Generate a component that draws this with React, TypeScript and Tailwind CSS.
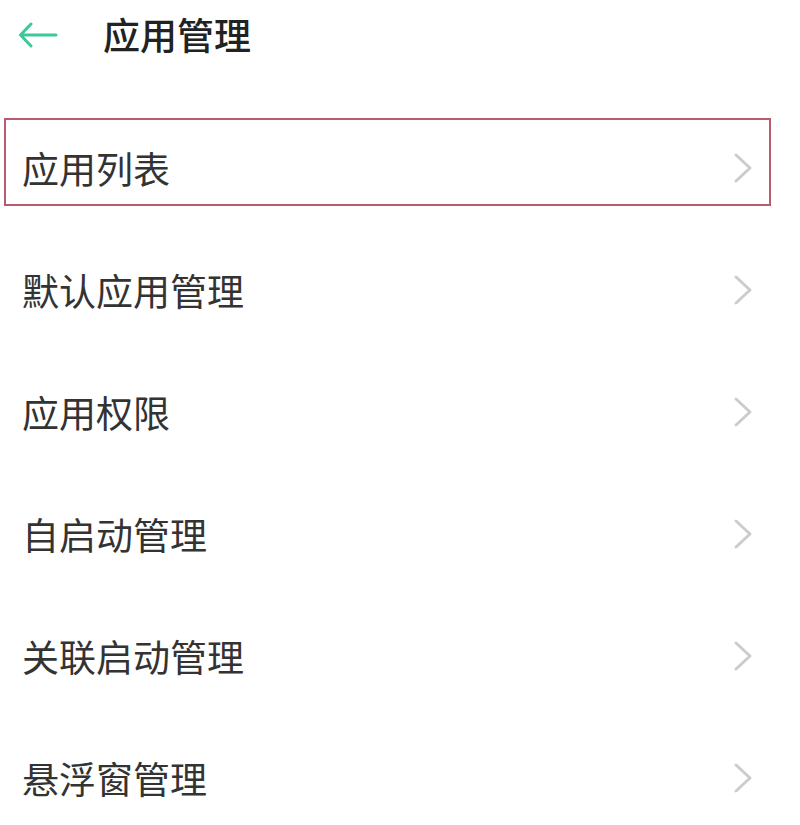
import React from "react";

const items = ["应用列表", "默认应用管理", "应用权限", "自启动管理", "关联启动管理", "悬浮窗管理"];

function Chevron() {
  return (
    <svg width="22" height="32" viewBox="0 0 22 32" fill="none" className="shrink-0">
      <path d="M4 3 L18 16 L4 29" stroke="#cccccc" strokeWidth="3" strokeLinecap="round" strokeLinejoin="round" />
    </svg>
  );
}

export default function App() {
  return (
    <div
      className="w-[800px] h-[825px] overflow-hidden bg-white"
      style={{ fontFamily: '"Noto Sans CJK SC", "Noto Sans", sans-serif' }}
    >
      <header className="flex h-[70px] items-center">
        <svg width="40" height="26" viewBox="0 0 40 26" fill="none" className="ml-[18px]">
          <path
            d="M38 13 H3 M13 2 L2.5 13 L13 24"
            stroke="#3ec898"
            strokeWidth="3"
            strokeLinecap="round"
            strokeLinejoin="round"
          />
        </svg>
        <h1 className="ml-[45px] text-[37px] font-medium text-[#222222]">应用管理</h1>
      </header>

      <ul className="mt-[37px]">
        {items.map((label, i) => (
          <li key={label} className="relative flex h-[122px] items-center justify-between pl-[22px] pr-[46px]">
            {i === 0 && (
              <div className="pointer-events-none absolute left-[4px] top-[11px] h-[88px] w-[767px] border-2 border-[#b95a6f]" />
            )}
            <span className="text-[37px] leading-none text-[#333333]">{label}</span>
            <Chevron />
          </li>
        ))}
      </ul>
    </div>
  );
}
